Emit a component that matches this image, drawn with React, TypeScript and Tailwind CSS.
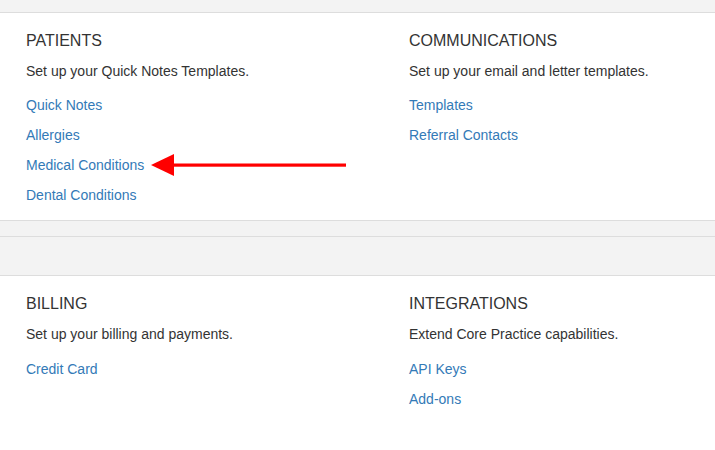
import React from "react";

type Section = {
  title: string;
  description: string;
  links: string[];
};

const topSections: Section[] = [
  {
    title: "PATIENTS",
    description: "Set up your Quick Notes Templates.",
    links: ["Quick Notes", "Allergies", "Medical Conditions", "Dental Conditions"],
  },
  {
    title: "COMMUNICATIONS",
    description: "Set up your email and letter templates.",
    links: ["Templates", "Referral Contacts"],
  },
];

const bottomSections: Section[] = [
  {
    title: "BILLING",
    description: "Set up your billing and payments.",
    links: ["Credit Card"],
  },
  {
    title: "INTEGRATIONS",
    description: "Extend Core Practice capabilities.",
    links: ["API Keys", "Add-ons"],
  },
];

function PointerArrow() {
  return (
    <svg
      className="absolute left-[125px] top-[-13px]"
      width="200"
      height="26"
      viewBox="0 0 200 26"
    >
      <polygon points="0,13 23,2 23,24" fill="#ff0000" />
      <rect x="21" y="11.5" width="174" height="3.2" fill="#ff0000" />
    </svg>
  );
}

function SectionBlock({
  section,
  pointAt,
  linksGap,
}: {
  section: Section;
  pointAt?: string;
  linksGap: string;
}) {
  return (
    <div>
      <h3 className="text-[16px] leading-[20px] text-[#333333]">{section.title}</h3>
      <p className="mt-[10px] text-[14px] leading-[20px] text-[#333333]">{section.description}</p>
      <ul className={`${linksGap} flex flex-col gap-[10px]`}>
        {section.links.map((link) => (
          <li key={link} className="relative text-[14px] leading-[20px]">
            <a href="#" className="text-[#337ab7]">
              {link}
            </a>
            {pointAt === link && (
              <span className="absolute left-0 top-1/2">
                <PointerArrow />
              </span>
            )}
          </li>
        ))}
      </ul>
    </div>
  );
}

export default function App() {
  return (
    <div
      className="w-[715px] h-[450px] overflow-hidden bg-white"
      style={{ fontFamily: '"Liberation Sans", Arial, sans-serif' }}
    >
      <div className="h-[13px] bg-[#f3f3f3] border-b border-[#dddddd]" />
      <section className="grid grid-cols-[383px_1fr] pl-[26px] pt-[18px] pb-[15px] h-[208px] border-b border-[#dddddd] bg-white">
        <SectionBlock section={topSections[0]} pointAt="Medical Conditions" linksGap="mt-[14px]" />
        <SectionBlock section={topSections[1]} linksGap="mt-[14px]" />
      </section>
      <div className="h-[16px] bg-[#f3f3f3] border-b border-[#dddddd]" />
      <div className="h-[39px] bg-[#f3f3f3] border-b border-[#dddddd]" />
      <section className="grid grid-cols-[383px_1fr] pl-[26px] pt-[18px] bg-white">
        <SectionBlock section={bottomSections[0]} linksGap="mt-[15px]" />
        <SectionBlock section={bottomSections[1]} linksGap="mt-[15px]" />
      </section>
    </div>
  );
}
